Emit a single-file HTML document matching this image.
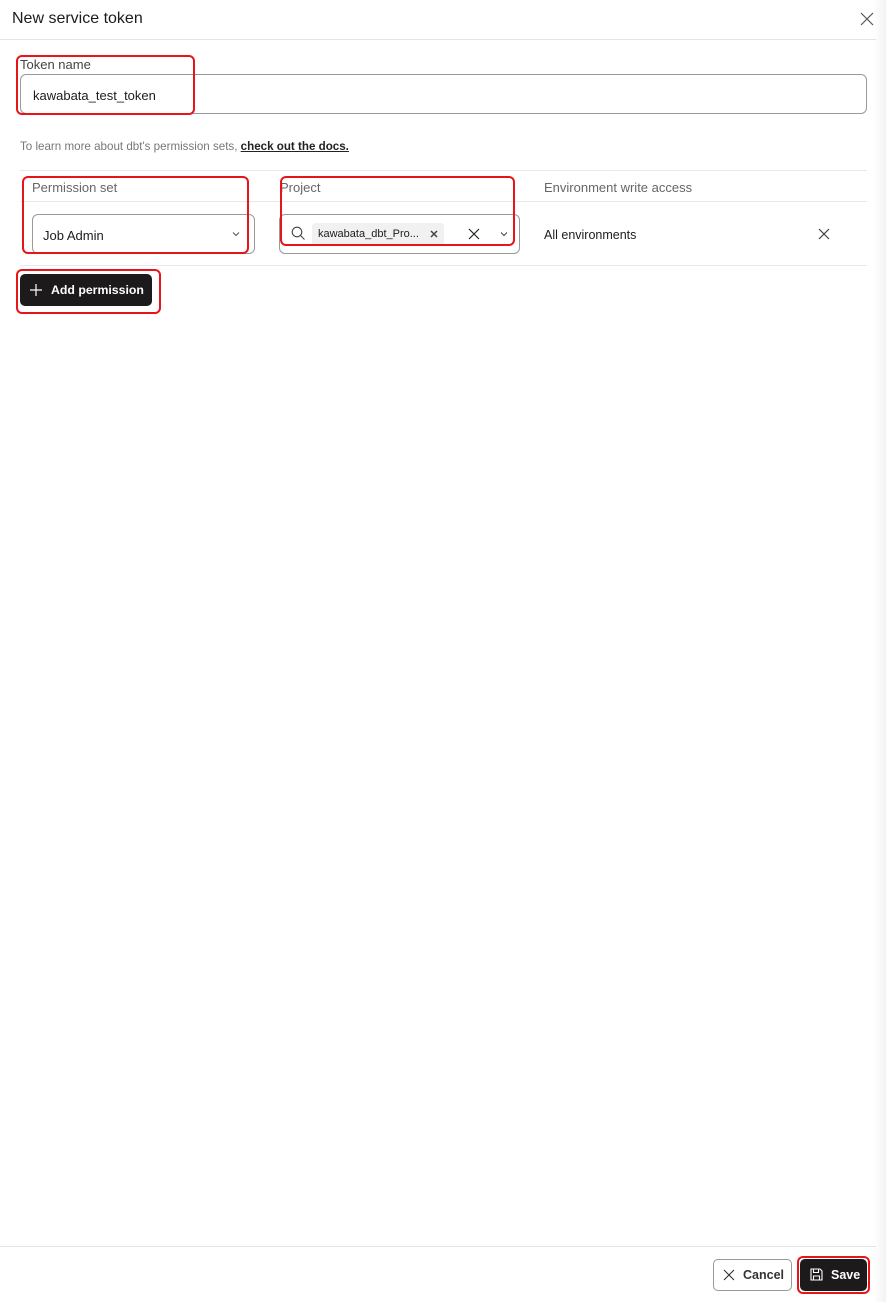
<!DOCTYPE html>
<html><head><style>
*{box-sizing:border-box;margin:0;padding:0}
body{width:886px;height:1302px;position:relative;background:#fff;font-family:"Liberation Sans",sans-serif;color:#1c1c1c;overflow:hidden}
.a{position:absolute}
.red{position:absolute;border:2px solid #e8141b;border-radius:6px}
.shadow{position:absolute;right:0;top:0;width:12px;height:1302px;background:linear-gradient(to right,#fff,#f2f2f2)}
</style></head><body>
<div class="shadow"></div>
<div class="a" style="left:12px;top:10px;font-size:16px;color:#1c1c1c">New service token</div>
<svg class="a" style="left:860px;top:12px" width="14" height="14" viewBox="0 0 14 14"><path d="M1 1L13 13M13 1L1 13" stroke="#555" stroke-width="1.2"/></svg>
<div class="a" style="left:0;top:39px;width:876px;height:1px;background:#e4e4e4"></div>

<div class="a" style="left:20px;top:57px;font-size:13px;color:#444">Token name</div>
<div class="a" style="left:20px;top:74px;width:847px;height:40px;border:1px solid #999;border-radius:6px"></div>
<div class="a" style="left:33px;top:88px;font-size:13px">kawabata_test_token</div>
<div class="red" style="left:16px;top:55px;width:179px;height:60px"></div>

<div class="a" style="left:20px;top:140px;font-size:11.6px;color:#777">To learn more about dbt's permission sets, <span style="color:#222;text-decoration:underline;font-weight:bold">check out the docs.</span></div>

<div class="a" style="left:20px;top:170px;width:847px;height:1px;background:#e8e8e8"></div>
<div class="a" style="left:20px;top:201px;width:847px;height:1px;background:#e8e8e8"></div>
<div class="a" style="left:20px;top:265px;width:847px;height:1px;background:#e8e8e8"></div>
<div class="a" style="left:32px;top:180px;font-size:13px;color:#666">Permission set</div>
<div class="a" style="left:280px;top:180px;font-size:13px;color:#666">Project</div>
<div class="a" style="left:544px;top:180px;font-size:13px;color:#666">Environment write access</div>

<div class="a" style="left:32px;top:214px;width:223px;height:40px;border:1px solid #999;border-radius:6px"></div>
<div class="a" style="left:43px;top:228px;font-size:13px">Job Admin</div>
<svg class="a" style="left:232px;top:231px" width="8" height="6" viewBox="0 0 8 6"><path d="M1 1.5L4 4.5L7 1.5" stroke="#555" fill="none"/></svg>
<div class="red" style="left:22px;top:176px;width:227px;height:78px"></div>

<div class="a" style="left:279px;top:214px;width:241px;height:40px;border:1px solid #999;border-radius:6px"></div>
<svg class="a" style="left:291px;top:226px" width="15" height="15" viewBox="0 0 15 15"><circle cx="6" cy="6" r="4.8" stroke="#444" fill="none" stroke-width="1.1"/><path d="M9.5 9.5L13.5 13.5" stroke="#444" stroke-width="1.1"/></svg>
<div class="a" style="left:312px;top:223px;width:132px;height:22px;background:#f1f1f1;border-radius:3px"></div>
<div class="a" style="left:318px;top:228px;font-size:11px">kawabata_dbt_Pro...</div>
<svg class="a" style="left:430px;top:230px" width="8" height="8" viewBox="0 0 8 8"><path d="M1 1L7 7M7 1L1 7" stroke="#444" stroke-width="1.5"/></svg>
<svg class="a" style="left:468px;top:228px" width="12" height="12" viewBox="0 0 12 12"><path d="M1 1L11 11M11 1L1 11" stroke="#222" stroke-width="1.2"/></svg>
<svg class="a" style="left:500px;top:231px" width="8" height="6" viewBox="0 0 8 6"><path d="M1 1.5L4 4.5L7 1.5" stroke="#444" fill="none"/></svg>
<div class="red" style="left:280px;top:176px;width:235px;height:70px"></div>

<div class="a" style="left:544px;top:228px;font-size:12.5px">All environments</div>
<svg class="a" style="left:818px;top:228px" width="12" height="12" viewBox="0 0 12 12"><path d="M1 1L11 11M11 1L1 11" stroke="#333" stroke-width="1.1"/></svg>

<div class="a" style="left:20px;top:274px;width:132px;height:32px;background:#1c1a1a;border-radius:5px"></div>
<svg class="a" style="left:30px;top:284px" width="12" height="12" viewBox="0 0 12 12"><path d="M6 0V12M0 6H12" stroke="#fff" stroke-width="1.2"/></svg>
<div class="a" style="left:51px;top:283px;font-size:12.3px;color:#fff;font-weight:bold">Add permission</div>
<div class="red" style="left:16px;top:269px;width:145px;height:45px"></div>

<div class="a" style="left:0;top:1246px;width:876px;height:1px;background:#e4e4e4"></div>
<div class="a" style="left:713px;top:1259px;width:79px;height:32px;border:1px solid #999;border-radius:5px"></div>
<svg class="a" style="left:723px;top:1269px" width="12" height="12" viewBox="0 0 12 12"><path d="M1 1L11 11M11 1L1 11" stroke="#333" stroke-width="1.1"/></svg>
<div class="a" style="left:743px;top:1268px;font-size:12.5px;font-weight:bold;color:#333">Cancel</div>
<div class="a" style="left:800px;top:1259px;width:67px;height:32px;background:#1c1a1a;border-radius:5px"></div>
<svg class="a" style="left:810px;top:1268px" width="13" height="13" viewBox="0 0 13 13"><path d="M1 1H10L12 3V12H1Z M3.5 1V4.5H8.5V1 M3.5 12V8H9.5V12" stroke="#fff" fill="none" stroke-width="1.1"/></svg>
<div class="a" style="left:831px;top:1268px;font-size:12.5px;font-weight:bold;color:#fff">Save</div>
<div class="red" style="left:797px;top:1256px;width:73px;height:38px"></div>
</body></html>
